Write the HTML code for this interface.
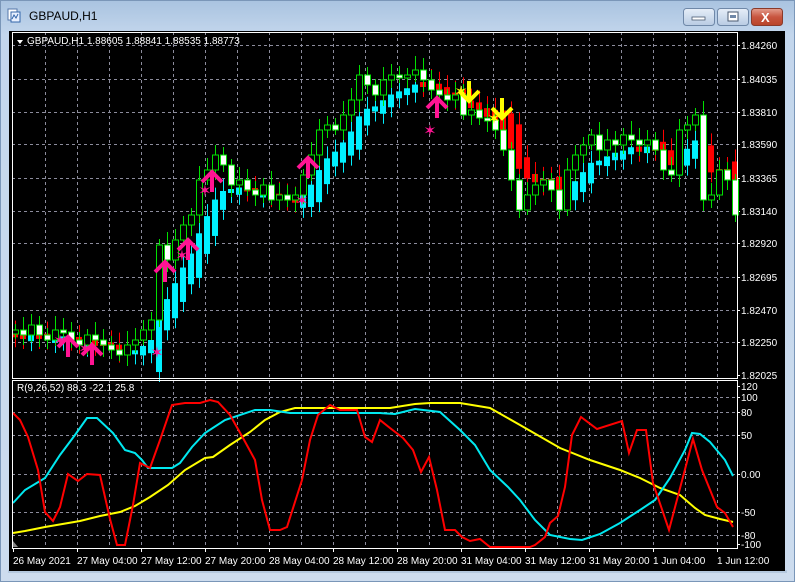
<!DOCTYPE html>
<html><head><meta charset="utf-8"><style>
html,body{margin:0;padding:0;width:795px;height:582px;overflow:hidden;background:#c9daee}
svg{display:block}
text{font-family:"Liberation Sans",sans-serif;font-size:10px}
</style></head><body>
<svg id="s" width="795" height="582" xmlns="http://www.w3.org/2000/svg">
<defs>
<linearGradient id="fr" x1="0" y1="0" x2="0" y2="1"><stop offset="0" stop-color="#a9c3e0"/><stop offset="0.06" stop-color="#c3d6ec"/><stop offset="1" stop-color="#cddcee"/></linearGradient>
<linearGradient id="bt" x1="0" y1="0" x2="0" y2="1"><stop offset="0" stop-color="#e6eef8"/><stop offset="1" stop-color="#b8cbe3"/></linearGradient>
<linearGradient id="bx" x1="0" y1="0" x2="0" y2="1"><stop offset="0" stop-color="#e4a090"/><stop offset="0.5" stop-color="#c8553f"/><stop offset="1" stop-color="#b84428"/></linearGradient>
</defs>
<rect x="0" y="0" width="795" height="582" fill="url(#fr)"/>
<rect x="0.5" y="0.5" width="794" height="581" fill="none" stroke="#7a96b8"/>
<rect x="8" y="570" width="779" height="3" fill="#b4c8de"/>
<rect x="8" y="9" width="9" height="11" fill="#fff" stroke="#5577aa"/>
<rect x="11" y="12" width="9" height="10" fill="#e8f0ff" stroke="#3366aa"/>
<path d="M12 19 l2-4 l2 3 l2-4" stroke="#3366aa" fill="none"/>
<text x="29" y="20" style="font-size:12px" fill="#000">GBPAUD,H1</text>
<rect x="683.5" y="8.5" width="31" height="17" rx="3" fill="url(#bt)" stroke="#6f88a8"/>
<rect x="692" y="17" width="13" height="3" fill="#fff" stroke="#4a5a70" stroke-width="0.8"/>
<rect x="717.5" y="8.5" width="31" height="17" rx="3" fill="url(#bt)" stroke="#6f88a8"/>
<rect x="728" y="12" width="10" height="9" fill="#fff" stroke="#4a5a70"/><rect x="730" y="15" width="6" height="3" fill="#6f88a8"/>
<rect x="751.5" y="8.5" width="31" height="17" rx="3" fill="url(#bx)" stroke="#8a3a2a"/>
<text x="761" y="22" style="font-size:13px;font-weight:bold" fill="#fff">X</text>
<rect x="9" y="31" width="776" height="540" fill="#000"/>
<g id="g"></g>
</svg>
<script>
(function(){
var NS="http://www.w3.org/2000/svg",g=document.getElementById("g");
function el(t,a){var e=document.createElementNS(NS,t);for(var k in a)e.setAttribute(k,a[k]);g.appendChild(e);return e}
function tx(x,y,s,c,anchor){var e=el("text",{x:x,y:y,fill:c||"#fff"});if(anchor)e.setAttribute("text-anchor",anchor);e.textContent=s;return e}
var L=12,R=737,T1=32,B1=378,T2=380,B2=548;
var dash={stroke:"#8c8c9c","stroke-dasharray":"3,3","stroke-width":1};
for(var x=45;x<R;x+=32){el("line",Object.assign({x1:x+.5,x2:x+.5,y1:T1,y2:B1},dash));el("line",Object.assign({x1:x+.5,x2:x+.5,y1:T2,y2:B2},dash));}
var pl=[["1.84260",45],["1.84035",79],["1.83810",112],["1.83590",144],["1.83365",178],["1.83140",211],["1.82920",243],["1.82695",277],["1.82470",310],["1.82250",342],["1.82025",375]];
pl.forEach(function(p,i){if(i<10)el("line",Object.assign({x1:L,x2:R,y1:p[1]+.5,y2:p[1]+.5},dash));el("line",{x1:R,x2:R+3,y1:p[1]+.5,y2:p[1]+.5,stroke:"#fff"});tx(741,p[1]+4,p[0]);});
var il=[["120",386,0],["100",397,1],["80",412,1],["50",435,1],["0.00",474,1],["-50",512,1],["-80",535,1],["-100",544,0]];
il.forEach(function(p){if(p[2])el("line",Object.assign({x1:L,x2:R,y1:p[1]+.5,y2:p[1]+.5},dash));el("line",{x1:R,x2:R+3,y1:p[1]+.5,y2:p[1]+.5,stroke:"#fff"});tx(741,p[1]+4,p[0]);});
var tl=["26 May 2021","27 May 04:00","27 May 12:00","27 May 20:00","28 May 04:00","28 May 12:00","28 May 20:00","31 May 04:00","31 May 12:00","31 May 20:00","1 Jun 04:00","1 Jun 12:00"];
tl.forEach(function(s,i){var x=13+64*i;el("line",{x1:x+.5,x2:x+.5,y1:B2,y2:B2+4,stroke:"#fff"});tx(x,564,s);});
var C=[330,335,325,335,340,330,332,340,345,335,340,345,350,355,345,340,330,320,245,260,240,225,215,180,170,155,165,185,180,190,195,185,200,195,200,195,175,155,130,125,130,115,100,75,85,95,80,75,78,75,70,80,90,95,100,95,115,110,118,120,130,150,180,210,195,185,180,190,210,170,155,145,135,150,140,145,135,140,145,140,150,170,175,130,125,115,200,195,170,180,215];
var e=C[0]+5,ha=[],cd=[];
for(var i=0;i<C.length;i++){var cx=15+8*i,o=i?C[i-1]:C[0]+4,c=C[i];
 var h=Math.min(o,c)-6-((i*7)%9),l=Math.max(o,c)+5+((i*5)%8);
 var ep=e;e=e+0.3*(c+6-e);
 ha.push([cx,ep,e]);cd.push([cx,o,c,h,l]);}
ha.forEach(function(p){var d=p[1]-p[2];var a=p[2],b=p[2]+d*2.2;var lo=Math.min(a,b),hi=Math.max(a,b);if(hi-lo<4){lo-=2;hi+=2}
 var col=d>0?"#00f0ff":"#ff0000";
 el("line",{x1:p[0]+.5,x2:p[0]+.5,y1:lo-12,y2:hi+10,stroke:col});
 el("rect",{x:p[0]-3,y:lo,width:6,height:hi-lo,fill:col});});
cd.forEach(function(d){var cx=d[0],o=d[1],c=d[2],h=d[3],l=d[4];
 el("line",{x1:cx+.5,x2:cx+.5,y1:h,y2:l,stroke:"#00e000"});
 var tp=Math.min(o,c),bh=Math.max(Math.abs(o-c),3);
 el("rect",{x:cx-2.5,y:tp,width:6,height:bh,fill:(c<o?"#000":"#fff"),stroke:"#00e000"});});
function up(x,y,col){el("path",{d:"M"+x+" "+(y+20)+" V"+y+" M"+(x-10)+" "+(y+10)+" L"+x+" "+y+" L"+(x+10)+" "+(y+10),stroke:col,"stroke-width":4,fill:"none"});}
function dn(x,y,col){el("path",{d:"M"+x+" "+(y-20)+" V"+y+" M"+(x-10)+" "+(y-10)+" L"+x+" "+y+" L"+(x+10)+" "+(y-10),stroke:col,"stroke-width":4,fill:"none"});}
function star(x,y,col){tx(x,y+6,"✶",col,"middle").setAttribute("style","font-size:16px");}
[[68,337],[92,345],[165,262],[188,240],[212,172],[308,158],[437,98]].forEach(function(p){up(p[0],p[1],"#ff1493")});
[[60,340],[85,348],[157,352],[182,255],[205,190],[302,200],[430,130]].forEach(function(p){star(p[0],p[1],"#ff1493")});
[[469,101],[502,118]].forEach(function(p){dn(p[0],p[1],"#ffff00")});
[[461,91],[494,118]].forEach(function(p){star(p[0],p[1],"#ffff00")});
function pl2(pts,col){el("polyline",{points:pts.map(function(p){return p.join(",")}).join(" "),fill:"none",stroke:col,"stroke-width":2});}
pl2([[13,533],[25,531],[45,527],[80,521],[100,516],[120,512],[135,506],[150,497],[168,485],[185,470],[205,458],[213,457],[230,445],[250,432],[265,420],[280,412],[295,408],[330,408],[370,408],[390,408],[415,404],[430,403],[460,403],[490,408],[520,425],[560,448],[590,460],[620,470],[640,478],[660,488],[680,495],[695,508],[705,515],[720,519],[733,522]],"#ffff00");
pl2([[13,503],[25,490],[45,478],[60,455],[75,435],[87,418],[97,418],[113,433],[125,450],[135,453],[142,460],[148,468],[172,468],[180,463],[192,447],[205,433],[225,420],[255,410],[270,410],[290,413],[380,413],[395,414],[415,409],[440,412],[460,430],[475,445],[490,470],[508,487],[520,500],[535,520],[550,535],[570,539],[582,540],[600,534],[620,523],[640,510],[655,500],[670,478],[685,450],[692,433],[700,434],[710,442],[725,460],[733,476]],"#00e8f0");
pl2([[13,413],[20,420],[28,437],[38,470],[45,512],[53,521],[60,507],[68,474],[78,481],[87,474],[100,475],[110,519],[117,545],[125,545],[133,505],[140,463],[150,468],[160,440],[172,405],[185,403],[200,403],[210,400],[218,402],[230,415],[243,438],[255,460],[262,500],[270,530],[280,530],[287,527],[302,480],[310,440],[318,415],[330,405],[340,410],[357,410],[365,437],[372,442],[380,420],[390,428],[403,438],[413,450],[421,472],[429,457],[437,490],[445,530],[455,530],[462,537],[470,541],[480,539],[490,547],[530,547],[535,545],[545,537],[550,523],[558,516],[565,487],[572,435],[581,417],[597,429],[622,421],[629,453],[637,430],[646,430],[653,483],[669,530],[693,439],[702,470],[717,507],[725,513],[733,527]],"#ff0000");
el("rect",{x:L+.5,y:T1+.5,width:R-L,height:B1-T1,fill:"none",stroke:"#fff"});
el("rect",{x:L+.5,y:T2+.5,width:R-L,height:B2-T2,fill:"none",stroke:"#fff"});
el("path",{d:"M17 40 h6 l-3 4 z",fill:"#fff"});
tx(27,44,"GBPAUD,H1  1.88605 1.88841 1.88535 1.88773");
tx(17,391,"R(9,26,52) 88.3 -22.1 25.8");
el("path",{d:"M13 547 v-6 l5 6 z",fill:"#888"});
})();
</script>
</body></html>
